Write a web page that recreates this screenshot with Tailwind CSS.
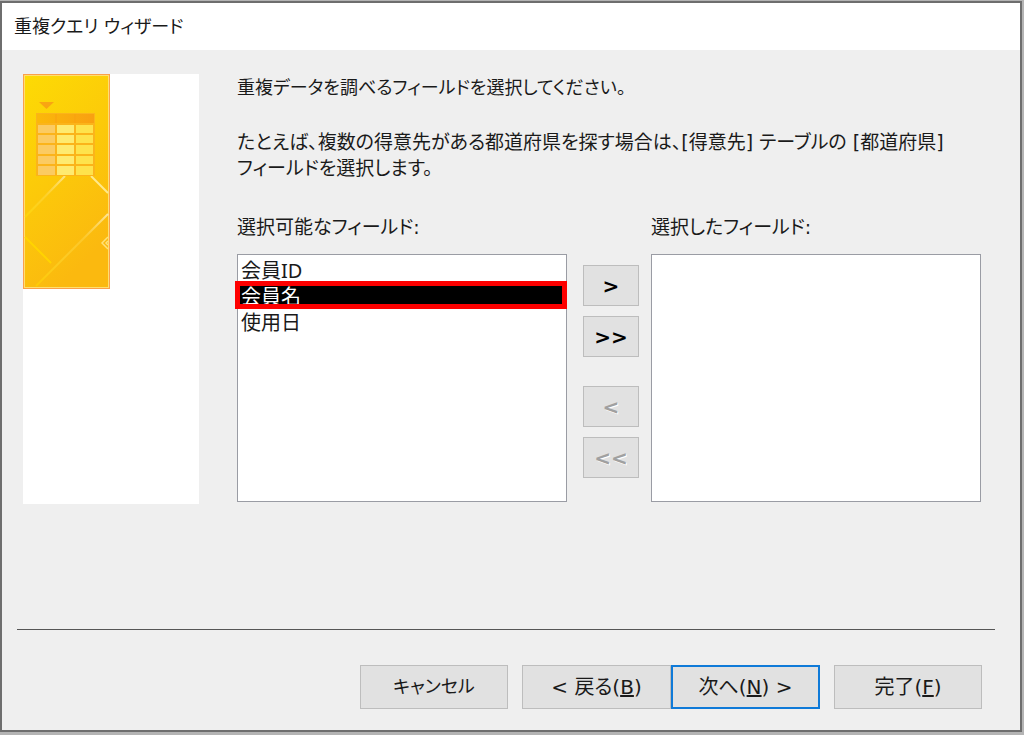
<!DOCTYPE html>
<html lang="ja">
<head>
    <meta charset="UTF-8">
    <meta name="viewport" content="width=device-width, initial-scale=1.0">
    <title>重複クエリ ウィザード</title>
    <script src="https://cdn.jsdelivr.net/npm/@tailwindcss/browser@4"></script>
    <style>
        body, button {
            font-family: 'DejaVu Sans', 'Noto Sans CJK JP', sans-serif;
            font-feature-settings: 'palt';
        }
        select {
            font-family: 'Noto Sans', 'Noto Sans CJK JP', sans-serif;
        }
    </style>
</head>
<body class="bg-[#b4b4b4] text-[20px] leading-[26px] text-[#1a1a1a]">
    <div class="flex min-h-screen flex-col pt-px pr-[2px] pb-[3px]">
        <div class="flex grow flex-col border-2 border-[#6e6e6e] bg-[#efefef]">
            <!-- Title bar -->
            <header class="flex h-[47px] items-center bg-white px-3">
                <h1 class="text-[18px]">重複クエリ ウィザード</h1>
            </header>

            <main class="flex gap-[38px] pt-6 pr-[39px] pl-[21px]">
                <!-- Banner -->
                <div class="w-[176px] shrink-0 bg-white">
                    <svg class="block" width="87" height="215" viewBox="0 0 87 215" aria-hidden="true">
                        <defs>
                            <linearGradient id="gold" x1="0" y1="0" x2="0.4" y2="1">
                                <stop offset="0" stop-color="#fddb04"/>
                                <stop offset="1" stop-color="#fbb90f"/>
                            </linearGradient>
                            <linearGradient id="head" x1="0" x2="1">
                                <stop offset="0" stop-color="#fbb80a"/>
                                <stop offset="1" stop-color="#f9a011"/>
                            </linearGradient>
                            <linearGradient id="fade" gradientUnits="userSpaceOnUse" x1="86" y1="140" x2="14" y2="212">
                                <stop offset="0" stop-color="#fff" stop-opacity="0.6"/>
                                <stop offset="0.35" stop-color="#ffe36a" stop-opacity="0.3"/>
                                <stop offset="1" stop-color="#ffd400" stop-opacity="0.6"/>
                            </linearGradient>
                            <linearGradient id="fade2" gradientUnits="userSpaceOnUse" x1="42" y1="102" x2="2" y2="143">
                                <stop offset="0" stop-color="#fff" stop-opacity="0.5"/>
                                <stop offset="0.5" stop-color="#ffe36a" stop-opacity="0.3"/>
                                <stop offset="1" stop-color="#ffe000" stop-opacity="0.5"/>
                            </linearGradient>
                        </defs>
                        <rect x="0.5" y="0.5" width="86" height="214" fill="url(#gold)" stroke="#fba04a"/>
                        <rect x="1.5" y="1.5" width="84" height="212" fill="none" stroke="#ffdf70"/>
                        <path d="M16 28h15l-7.500 7z" fill="#f9a512"/>
                        <path d="M42 102L2 143" stroke="url(#fade2)" stroke-width="2"/>
                        <path d="M68 102l17 17" stroke="#ffe98c" stroke-width="2"/>
                        <path d="M85 140L13 212" stroke="url(#fade)" stroke-width="2"/>
                        <path d="M2 163l26 26" stroke="#ffd400" stroke-width="2"/>
                        <path d="M85 163l-6 6 6 6M85 167l-2 2 2 2" fill="none" stroke="#ffe17a" stroke-width="1.500"/>
                        <rect x="13" y="39" width="59" height="63" fill="#fbb41a"/>
                        <rect x="14" y="40" width="57" height="9" fill="url(#head)"/>
                        <path d="M33 40v9M52 40v9" stroke="#f9a011"/>
                        <g fill="#fbcb62">
                            <rect x="15" y="51" width="17" height="8"/>
                            <rect x="15" y="61" width="17" height="8"/>
                            <rect x="15" y="71" width="17" height="9"/>
                            <rect x="15" y="82" width="17" height="8"/>
                            <rect x="15" y="92" width="17" height="9"/>
                        </g>
                        <g fill="#feea70">
                            <rect x="34" y="51" width="17" height="8"/>
                            <rect x="34" y="61" width="17" height="8"/>
                            <rect x="34" y="71" width="17" height="9"/>
                            <rect x="34" y="82" width="17" height="8"/>
                            <rect x="34" y="92" width="17" height="9"/>
                        </g>
                        <g fill="#fee34c">
                            <rect x="53" y="51" width="17" height="8"/>
                            <rect x="53" y="61" width="17" height="8"/>
                            <rect x="53" y="71" width="17" height="9"/>
                            <rect x="53" y="82" width="17" height="8"/>
                            <rect x="53" y="92" width="17" height="9"/>
                        </g>
                    </svg>
                </div>

                <div class="grow pt-px pb-[2px]">
                    <p class="text-[18px]">重複データを調べるフィールドを選択してください。</p>
                    <p class="mt-7 text-[19px]">たとえば、複数の得意先がある都道府県を探す場合は、[得意先] テーブルの [都道府県]<br>フィールドを選択します。</p>

                    <!-- Field picker -->
                    <div class="mt-[33px] flex">
                        <div class="flex-1">
                            <label for="available" class="block text-[19px]">選択可能なフィールド:</label>
                            <div class="relative mt-[14px]">
                                <select id="available" size="9" class="block h-[248px] w-full appearance-none overflow-hidden border border-[#9a9ca4] bg-white p-0">
                                    <option class="h-[26px] min-h-0 p-0 px-[3px] leading-[26px]">会員ID</option>
                                    <option selected class="h-[26px] min-h-0 bg-black bg-[linear-gradient(#000,#000)] p-0 px-[3px] leading-[26px] text-white checked:text-white">会員名</option>
                                    <option class="h-[26px] min-h-0 p-0 px-[3px] leading-[26px]">使用日</option>
                                </select>
                                <div class="pointer-events-none absolute top-[27px] right-0 -left-[2px] h-[28px] border-[5px] border-[#fe0000]"></div>
                            </div>
                        </div>

                        <div class="mt-[51px] mr-3 ml-4 flex w-14 flex-col gap-[10px] font-bold">
                            <button type="button" class="h-[41px] border border-[#bdbdbd] bg-[#e1e1e1] text-black">&gt;</button>
                            <button type="button" class="h-[41px] border border-[#bdbdbd] bg-[#e1e1e1] text-black">&gt;&gt;</button>
                            <button type="button" disabled class="mt-[19px] h-[41px] border border-[#bdbdbd] bg-[#e1e1e1] text-[#a0a0a0] text-shadow-[1px_1px_0_#fff]">&lt;</button>
                            <button type="button" disabled class="h-[41px] border border-[#bdbdbd] bg-[#e1e1e1] text-[#a0a0a0] text-shadow-[1px_1px_0_#fff]">&lt;&lt;</button>
                        </div>

                        <div class="flex-1">
                            <label for="selected" class="block text-[19px]">選択したフィールド:</label>
                            <select id="selected" size="9" class="mt-[14px] block h-[248px] w-full appearance-none overflow-hidden border border-[#9a9ca4] bg-white p-0"></select>
                        </div>
                    </div>
                </div>
            </main>

            <!-- Wizard navigation -->
            <footer class="mt-auto px-[15px] pr-[25px] pb-[21px]">
                <hr class="border-t-[1px] border-[#555555]">
                <div class="mt-[35px] flex justify-end gap-[14px] pr-[13px]">
                    <button type="button" class="h-[44px] w-[148px] border border-[#bdbdbd] bg-[#e1e1e1] text-[18px]">キャンセル</button>
                    <div class="flex">
                        <button type="button" class="h-[44px] w-[149px] border border-[#bdbdbd] bg-[#e1e1e1]">&lt; 戻る(<u>B</u>)</button>
                        <button type="button" class="h-[44px] w-[149px] border-2 border-[#0f7ad8] bg-[#e1e1e1]">次へ(<u>N</u>) &gt;</button>
                    </div>
                    <button type="button" class="h-[44px] w-[148px] border border-[#bdbdbd] bg-[#e1e1e1]">完了(<u>F</u>)</button>
                </div>
            </footer>
        </div>
    </div>
</body>
</html>
